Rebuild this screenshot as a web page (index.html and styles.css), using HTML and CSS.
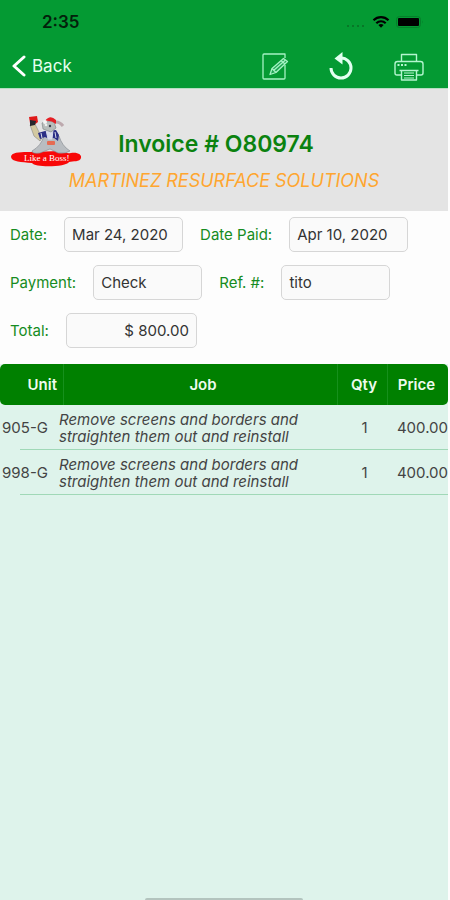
FILE: index.html
```html
<!DOCTYPE html>
<html lang="en">
<head>
  <meta charset="UTF-8">
  <meta name="viewport" content="width=device-width, initial-scale=1">
  <title>Invoice # O80974</title>
  <link rel="stylesheet" href="styles.css">
</head>
<body>

  <header class="top">
    <div class="status-bar">
      <span class="time">2:35</span>
      <div class="status-icons">
        <svg width="20" height="14" viewBox="0 0 20 14" fill="#086b24">
          <circle cx="2" cy="11" r="1"/><circle cx="7" cy="11" r="1"/><circle cx="12" cy="11" r="1"/><circle cx="17" cy="11" r="1"/>
        </svg>
        <svg width="18" height="14" viewBox="0 0 18 14" fill="none" stroke="#000" stroke-width="2.2">
          <path d="M1.5 5.2C5.8 1 12.2 1 16.5 5.2"/>
          <path d="M4.3 8.2C7 5.600 11 5.600 13.7 8.2"/>
          <path d="M6.4 9.9Q9 7.9 11.6 9.9L9 12.8Z" fill="#000" stroke="none"/>
        </svg>
        <svg width="28" height="14" viewBox="0 0 28 14">
          <rect x=".5" y="1.5" width="24" height="11" rx="3" fill="none" stroke="#057f2a"/>
          <rect x="2" y="3" width="21" height="8" rx="1" fill="#000"/>
          <path d="M26 5.5v3q1.5-1.5 0-3z" fill="#057f2a"/>
        </svg>
      </div>
    </div>

    <nav class="nav-bar">
      <a class="back" href="#">
        <svg width="14" height="22" viewBox="0 0 14 22" fill="none" stroke="#fff" stroke-width="3" stroke-linecap="round" stroke-linejoin="round">
          <path d="M12 2L2 11l10 9"/>
        </svg>
        Back
      </a>
      <div class="actions">
        <button type="button" aria-label="Edit">
          <svg width="32" height="32" viewBox="0 0 32 32" fill="none" stroke="#a5f2c4" stroke-width="1.3" stroke-linejoin="round">
            <path d="M26 8V4H5q-1 0-1 1v23q0 1 1 1h20q1 0 1-1V15"/>
            <path d="M11 24.5l2-6L24.500 8.500l4 3L17 22.500z" fill="#1fa653"/>
            <path d="M13 18.500l4 4M22 10.500l4 3.500M14.500 20.500L26.500 10"/>
          </svg>
        </button>
        <button type="button" aria-label="Refresh">
          <svg width="32" height="32" viewBox="0 0 32 32" fill="none" stroke="#e2fff0" stroke-width="3">
            <path d="M5 18A10 10 0 1 0 15 8"/>
            <path d="M8.500 8.500L16.500 2v12.500z" fill="#e2fff0" stroke="none"/>
          </svg>
        </button>
        <button type="button" aria-label="Print">
          <svg width="32" height="32" viewBox="0 0 32 32" fill="none" stroke="#b4f5cf" stroke-width="1.4" stroke-linejoin="round">
            <path d="M8.5 12V4.500h15V12"/>
            <path d="M8.500 25H4q-2 0-2-2V14q0-2.500 2.500-2.500h23Q30 11.500 30 14v9q0 2-2 2h-4.500"/>
            <path d="M6.500 20.500h19M8.500 20.500V30h15v-9.500"/>
            <path d="M11 23h10M11 25.500h10M11 28h10" stroke-width="1"/>
            <path d="M4.500 15h2M8 15h2M11.500 15h2" stroke-width="2"/>
          </svg>
        </button>
      </div>
    </nav>
  </header>

  <section class="invoice-head">
    <svg class="logo" width="72" height="52" viewBox="0 0 72 52" role="img" aria-label="Like a Boss!">
      <path d="M1 41C1 35 16 36 24 36L48 35C52 35 55 38 61 37C68 36 72 39 71 42C70 46 63 45 59 46C57 51 25 52 22 47C11 46 2 46 1 41Z" fill="#f80707"/>
      <path d="M34 20Q31 30 22 35Q22 38 30 37L40 33L48 37Q56 38 60 35Q52 30 49 20Z" fill="#b9bdc1" stroke="#7f858b" stroke-width=".6"/>
      <path d="M20 9l5-1 5 10 3 2-3 5-6-5z" fill="#d3c9a0" stroke="#777" stroke-width=".5"/>
      <path d="M19 1l8-1 1 6-4 3-4-2z" fill="#df1919"/>
      <path d="M20 4l6 1-1 4-5 1z" fill="#26272d"/>
      <path d="M28 17l7-2 11-1 3 5-1 6-4-3-5 1-4-2-5 2z" fill="#2b2f86"/>
      <path d="M36 14h7l-1 9h-4zM31 17l1 5M45 16l1 6" fill="#d9dcea" stroke="#d9dcea"/>
      <path d="M32 7Q36 4 44 6L46 12L41 16L33 13Z" fill="#b7bdbb" stroke="#777d80" stroke-width=".6"/>
      <path d="M35 5Q40-2 46 4L46 8Q41 4 35 5Z" fill="#e51f24"/>
      <circle cx="35" cy="6" r="2" fill="#f5f5f5"/>
      <path d="M46 6Q50 6 53 10" fill="none" stroke="#bda9ae" stroke-width="3"/>
      <circle cx="36" cy="9" r="1.3" fill="#eee"/><circle cx="40" cy="10" r="1.2" fill="#3c414b"/>
      <rect x="37" y="25" width="8" height="4" rx="1" fill="#e66b52"/>
      <text x="14" y="45" class="logo-text">Like a Boss!</text>
    </svg>
    <div class="titles">
      <h1>Invoice # O80974</h1>
      <p>MARTINEZ RESURFACE SOLUTIONS</p>
    </div>
  </section>

  <form class="details">
    <div class="field-row">
      <label for="date">Date:</label>
      <input id="date" class="date" type="text" value="Mar 24, 2020">
      <label for="date-paid">Date Paid:</label>
      <input id="date-paid" class="date" type="text" value="Apr 10, 2020">
    </div>
    <div class="field-row">
      <label for="payment">Payment:</label>
      <input id="payment" type="text" value="Check">
      <label for="ref">Ref. #:</label>
      <input id="ref" type="text" value="tito">
    </div>
    <div class="field-row">
      <label for="total">Total:</label>
      <input id="total" class="total" type="text" value="$ 800.00">
    </div>
  </form>

  <main class="jobs">
    <table>
      <thead>
        <tr>
          <th class="unit">Unit</th>
          <th class="job">Job</th>
          <th class="qty">Qty</th>
          <th class="price">Price</th>
        </tr>
      </thead>
      <tbody>
        <tr>
          <td class="unit">905-G</td>
          <td class="job">Remove screens and borders and straighten them out and reinstall</td>
          <td class="qty">1</td>
          <td class="price">400.00</td>
        </tr>
        <tr>
          <td class="unit">998-G</td>
          <td class="job">Remove screens and borders and straighten them out and reinstall</td>
          <td class="qty">1</td>
          <td class="price">400.00</td>
        </tr>
      </tbody>
    </table>
    <div class="home-indicator"></div>
  </main>

</body>
</html>
```

FILE: styles.css
```css
* { box-sizing: border-box; }
body { margin: 0; padding-right: 2px; min-height: 100vh; display: flex; flex-direction: column; background: #fdfdfd; font-family: Inter, "Liberation Sans", sans-serif; font-size: 15px; color: #333; }

.top { background: #049a33; border-bottom: 1px solid #b5dfc2; }
.status-bar { display: flex; justify-content: space-between; align-items: center; height: 44px; padding: 0 24px 0 42px; }
.time { font-size: 17px; font-weight: 600; color: #03210b; }
.status-icons { display: flex; align-items: center; gap: 6px; }
.nav-bar { display: flex; justify-content: space-between; align-items: center; height: 44px; padding: 0 23px 0 12px; }
.back { display: flex; align-items: center; gap: 6px; color: #e6ffef; font-size: 17px; text-decoration: none; }
.actions { display: flex; gap: 35px; }
.actions button { padding: 0; border: 0; background: none; height: 32px; }
.actions svg { display: block; }

.invoice-head { position: relative; padding: 40px 0 18px; background: #e4e4e4; text-align: center; }
.logo { position: absolute; left: 10px; top: 27px; }
.logo-text { font-family: "Liberation Serif", serif; font-size: 9px; fill: #fff; }
.invoice-head h1 { margin: 0; padding-right: 16px; font-size: 23px; line-height: 30px; font-weight: 600; color: #0b820f; }
.invoice-head p { margin: 10px 0 0; font-size: 18px; line-height: 24px; font-style: italic; color: #ffa630; }

.details { display: flex; flex-direction: column; gap: 13px; padding: 6px 10px 16px; }
.field-row { display: flex; align-items: center; gap: 17px; }
.field-row label { color: #168c22; white-space: nowrap; }
.field-row input { width: 109px; height: 35px; padding: 0 7px; border: 1px solid #d6d6d6; border-radius: 5px; background: #fafafa; font: inherit; color: #333; }
.field-row input.date { width: 119px; }
.field-row input.total { width: 131px; text-align: right; }

.jobs { flex: 1; display: flex; flex-direction: column; justify-content: space-between; background: #def3eb; }
table { width: 100%; border-collapse: separate; border-spacing: 0; table-layout: fixed; }
thead { background: linear-gradient(#fdfdfd, #fdfdfd) top / 100% 6px no-repeat; }
th { height: 41px; padding: 0; background: #008000; color: #eefbee; font-weight: 600; }
th.unit { width: 59px; padding-right: 2px; text-align: right; border-radius: 5px 0 0 5px; }
th.job { padding-left: 10px; background: linear-gradient(#16901c, #16901c) 4px 0 / 1px 100% no-repeat #008000; }
th.qty { width: 50px; padding-left: 3px; border-left: 1px solid #16901c; }
th.price { width: 61px; padding-right: 3px; border-left: 1px solid #16901c; border-radius: 0 5px 5px 0; }
tbody tr { background: linear-gradient(#a0d8b7, #a0d8b7) 20px bottom / 100% 1px no-repeat; }
td { height: 45px; padding: 0; color: #444; }
td.unit { padding-left: 2px; }
td.job { padding-right: 32px; line-height: 17px; font-style: italic; }
td.qty { padding-left: 5px; text-align: center; }
td.price { text-align: right; }
.home-indicator { width: 158px; height: 2px; margin: 0 auto; background: #b3c4be; border-radius: 2px 2px 0 0; }
```
